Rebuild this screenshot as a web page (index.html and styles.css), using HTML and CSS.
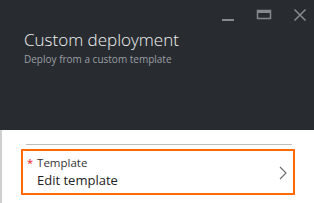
FILE: index.html
```html
<!DOCTYPE html>
<html>
<head>
<meta charset="utf-8">
<link rel="stylesheet" href="styles.css">
</head>
<body>
<div class="blade">
  <div class="header">
    <div class="controls">
      <svg class="ctl" width="14" height="14" viewBox="0 0 14 14"><rect x="1" y="11" width="12" height="2" fill="#85888c"/></svg>
      <svg class="ctl" width="16" height="14" viewBox="0 0 16 14"><rect x="1.5" y="2.5" width="13" height="8" fill="none" stroke="#85888c" stroke-width="1.5"/><rect x="1" y="2" width="14" height="3" fill="#85888c"/></svg>
      <svg class="ctl" width="14" height="14" viewBox="0 0 14 14"><path d="M1.5 1.5 L12.5 12.5 M12.5 1.5 L1.5 12.5" stroke="#85888c" stroke-width="1.6"/></svg>
    </div>
    <div class="title">Custom deployment</div>
    <div class="subtitle">Deploy from a custom template</div>
  </div>
  <div class="content">
    <div class="sep"></div>
    <div class="field">
      <div class="texts">
        <div class="label"><span class="req">*</span>Template</div>
        <div class="value">Edit template</div>
      </div>
      <svg class="chev" width="8" height="14" viewBox="0 0 8 14"><path d="M1 1 L7 7 L1 13" fill="none" stroke="#6b6b6b" stroke-width="1.1"/></svg>
    </div>
  </div>
</div>
</body>
</html>
```
FILE: styles.css
```css
html, body { margin: 0; padding: 0; }
body { width: 314px; height: 203px; overflow: hidden; background: #fff; font-family: "Open Sans", "Noto Sans", sans-serif; }
.blade { display: flex; flex-direction: column; height: 203px; }
.header { background: #282c31; height: 130px; box-sizing: border-box; padding: 0 0 0 24px; position: relative; }
.controls { display: flex; justify-content: flex-end; align-items: flex-start; gap: 21px; padding: 8px 7px 0 0; height: 14px; }
.ctl { display: block; }
.title { color: #f2f2f2; font-size: 17px; font-weight: 300; margin-top: 6px; line-height: 24px; letter-spacing: 0; }
.subtitle { color: #9b9fa4; font-size: 10px; line-height: 14px; margin-top: 0; }
.content { flex: 1; border-left: 2px solid #cfcfcf; padding: 14px 19px 0 19px; }
.sep { height: 1px; background: #bdbdbd; margin: 0 3px 0 5px; }
.field { margin-top: 4px; border: 2px solid #ff6a00; height: 42px; display: flex; align-items: center; justify-content: space-between; padding: 0 6px 0 4px; }
.texts { display: flex; flex-direction: column; }
.label { font-size: 11.5px; color: #333; line-height: 16px; }
.req { color: #e81123; font-size: 11px; margin-right: 4px; vertical-align: top; }
.value { font-size: 13px; color: #222; line-height: 19px; margin-left: 10px; }
.chev { display: block; margin-top: 2px; }
```
